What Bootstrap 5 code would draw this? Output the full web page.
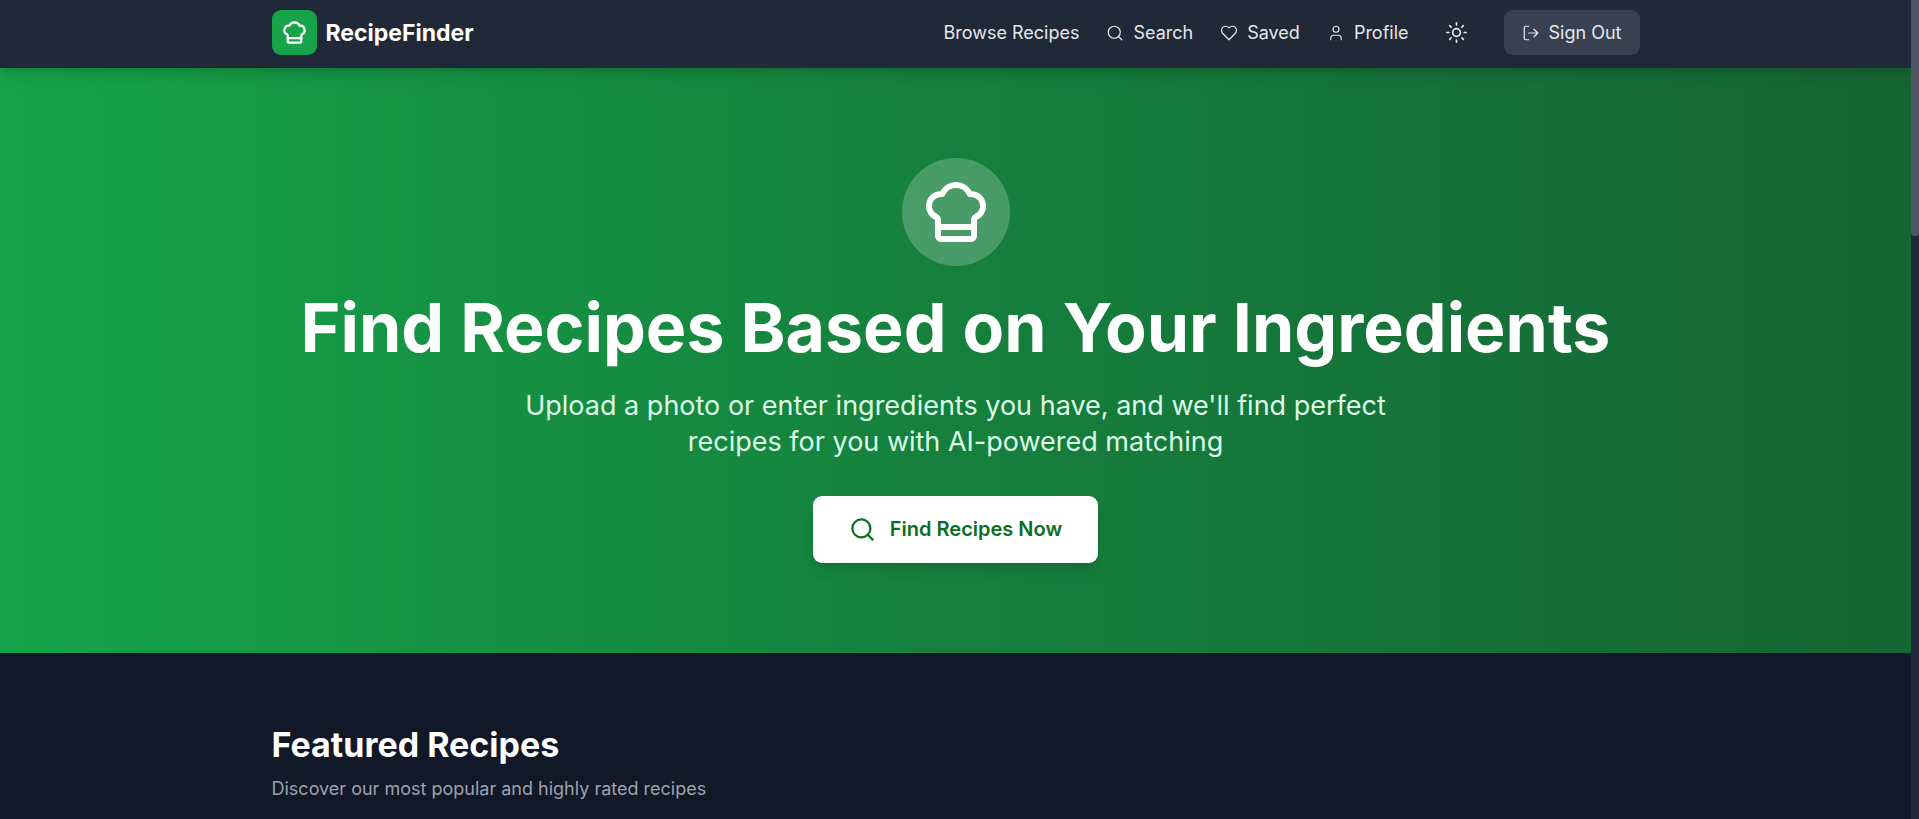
<!DOCTYPE html>
<html lang="en">
<head>
<meta charset="utf-8">
<meta name="viewport" content="width=device-width, initial-scale=1">
<title>RecipeFinder</title>
<link href="https://cdn.jsdelivr.net/npm/bootstrap@5.3.0/dist/css/bootstrap.min.css" rel="stylesheet">
<style>
  body { background: #111827; color: #fff; font-family: Inter, "Liberation Sans", sans-serif; font-size: 18px; line-height: 27px; }
  svg { fill: none; stroke: currentColor; stroke-width: 2; stroke-linecap: round; stroke-linejoin: round; flex: none; }
  .icon-sm { width: 18px; height: 18px; stroke-width: 1.6; }
  .icon-md { width: 23px; height: 23px; stroke-width: 1.8; }
  .icon-lg { width: 27px; height: 27px; }
  .icon-hero { width: 72px; height: 72px; }
  .page-body { min-height: 100vh; padding-right: 8px; }
  .page-width { max-width: 1440px; padding-left: 36px; padding-right: 36px; }
  .site-header { background: #1f2937; position: relative; z-index: 1; padding: 10px 0 13px; box-shadow: 0 4px 6px -1px rgba(0,0,0,.1), 0 10px 15px -3px rgba(0,0,0,.1); }
  .navbar-brand { font-size: 23px; line-height: 32px; font-weight: 700; gap: 9px; }
  .logo-tile { width: 45px; height: 45px; border-radius: 9px; background: #16a34a; }
  .main-links { gap: 27px; }
  .main-links .nav-link { color: #e5e7eb; padding: 0; gap: 9px; }
  .theme-btn { color: #e5e7eb; padding: 9px; }
  .signout-btn, .signout-btn:hover { background: #374151; color: #e5e7eb; font-size: 18px; line-height: 27px; padding: 9px 18px; border-radius: 9px; gap: 9px; }
  .hero { background: linear-gradient(to right, #16a34a, #15803d 50%, #166534); padding: 90px 0; }
  .hero-badge { padding: 18px; background: rgba(255,255,255,.22); border-radius: 50%; margin-bottom: 27px; }
  .hero h1 { font-size: 68px; line-height: 68px; font-weight: 700; margin-bottom: 27px; }
  .hero-text { color: #dcfce7; font-size: 27px; line-height: 36px; max-width: 864px; margin-bottom: 36px; }
  .find-btn, .find-btn:hover { background: #fff; color: #0b6e23; font-size: 20px; line-height: 31px; font-weight: 600; padding: 18px 36px; gap: 14px; border-radius: 9px; box-shadow: 0 10px 15px -3px rgba(0,0,0,.1), 0 4px 6px -4px rgba(0,0,0,.1); }
  .featured { padding-top: 72px; }
  .featured h2 { font-size: 34px; line-height: 40px; font-weight: 700; margin-bottom: 10px; }
  .featured p { color: #9ca3af; }
  .scroll-rail { width: 8px; background: #1f2937; z-index: 5; }
  .scroll-thumb { height: 28.8%; background: #4b5563; border-radius: 0 0 4px 4px; }
</style>
</head>
<body>
<svg class="d-none" aria-hidden="true">
  <symbol id="chef-hat" viewBox="0 0 24 24"><path d="M17 21a1 1 0 0 0 1-1v-5.35c0-.457.316-.844.727-1.041a4 4 0 0 0-2.134-7.589 5 5 0 0 0-9.186 0 4 4 0 0 0-2.134 7.588c.411.198.727.585.727 1.041V20a1 1 0 0 0 1 1Z"/><path d="M6 17h12"/></symbol>
  <symbol id="search" viewBox="0 0 24 24"><circle cx="11" cy="11" r="8"/><path d="m21 21-4.3-4.3"/></symbol>
</svg>
<div class="page-body">
  <header class="site-header">
    <nav class="page-width mx-auto d-flex align-items-center justify-content-between">
      <a class="navbar-brand text-white d-flex align-items-center m-0 p-0" href="#">
        <span class="logo-tile d-flex align-items-center justify-content-center"><svg class="icon-lg"><use href="#chef-hat"/></svg></span>
        RecipeFinder
      </a>
      <div class="main-links d-flex align-items-center">
        <a class="nav-link" href="#">Browse Recipes</a>
        <a class="nav-link d-flex align-items-center" href="#"><svg class="icon-sm"><use href="#search"/></svg>Search</a>
        <a class="nav-link d-flex align-items-center" href="#"><svg class="icon-sm" viewBox="0 0 24 24"><path d="M19 14c1.49-1.46 3-3.21 3-5.5A5.5 5.5 0 0 0 16.5 3c-1.76 0-3 .5-4.5 2-1.5-1.5-2.74-2-4.5-2A5.5 5.5 0 0 0 2 8.5c0 2.3 1.5 4.05 3 5.5l7 7Z"/></svg>Saved</a>
        <a class="nav-link d-flex align-items-center" href="#"><svg class="icon-sm" viewBox="0 0 24 24"><path d="M19 21v-2a4 4 0 0 0-4-4H9a4 4 0 0 0-4 4v2"/><circle cx="12" cy="7" r="4"/></svg>Profile</a>
        <button type="button" class="theme-btn btn border-0 d-flex" aria-label="Toggle theme"><svg class="icon-md" viewBox="0 0 24 24"><circle cx="12" cy="12" r="4"/><path d="M12 2v2M12 20v2M4.93 4.93l1.41 1.41M17.66 17.66l1.41 1.41M2 12h2M20 12h2M6.34 17.66l-1.41 1.41M19.07 4.93l-1.41 1.41"/></svg></button>
        <button type="button" class="signout-btn btn border-0 d-flex align-items-center"><svg class="icon-sm" viewBox="0 0 24 24"><path d="M9 21H5a2 2 0 0 1-2-2V5a2 2 0 0 1 2-2h4M16 17l5-5-5-5M21 12H9"/></svg>Sign Out</button>
      </div>
    </nav>
  </header>
  <main>
    <section class="hero">
      <div class="page-width mx-auto d-flex flex-column align-items-center text-center">
        <span class="hero-badge d-flex"><svg class="icon-hero"><use href="#chef-hat"/></svg></span>
        <h1>Find Recipes Based on Your Ingredients</h1>
        <p class="hero-text">Upload a photo or enter ingredients you have, and we'll find perfect recipes for you with AI-powered matching</p>
        <button type="button" class="find-btn btn border-0 d-flex align-items-center"><svg class="icon-lg"><use href="#search"/></svg>Find Recipes Now</button>
      </div>
    </section>
    <section class="featured">
      <div class="page-width mx-auto">
        <h2>Featured Recipes</h2>
        <p class="mb-0">Discover our most popular and highly rated recipes</p>
      </div>
    </section>
  </main>
</div>
<div class="scroll-rail position-fixed top-0 end-0 bottom-0" aria-hidden="true"><div class="scroll-thumb"></div></div>
<script src="https://cdn.jsdelivr.net/npm/bootstrap@5.3.0/dist/js/bootstrap.bundle.min.js"></script>
</body>
</html>
